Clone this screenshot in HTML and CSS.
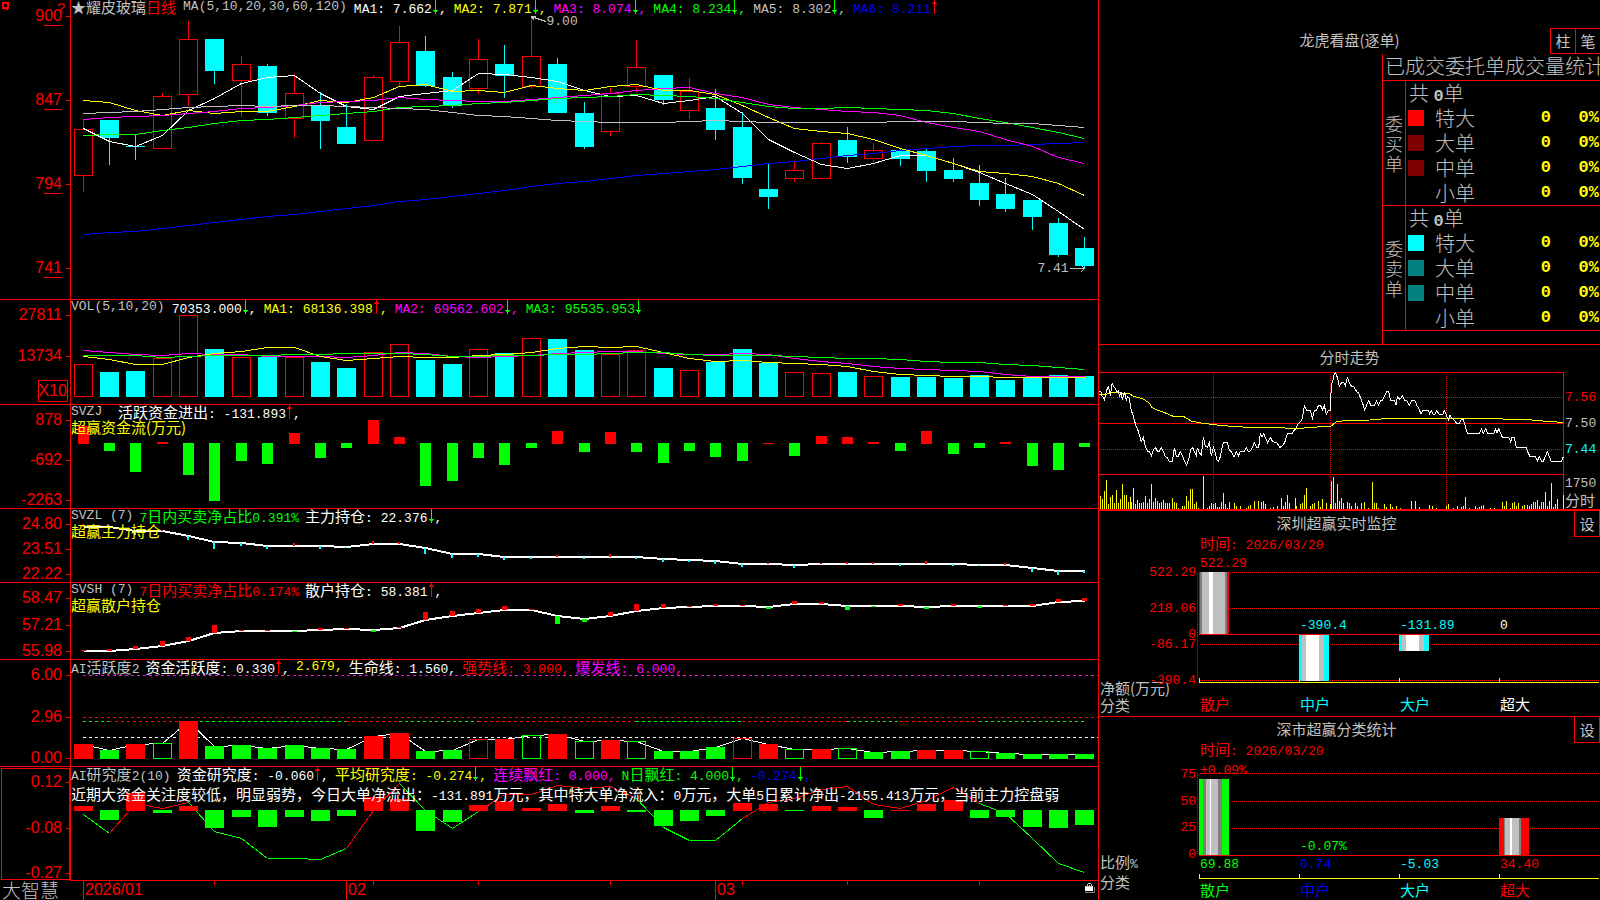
FILE: index.html
```html
<!DOCTYPE html>
<html lang="zh-CN">
<head>
    <meta charset="UTF-8">
    <meta name="viewport" content="width=device-width, initial-scale=1.0">
    <title>耀皮玻璃 日线</title>
    <link rel="stylesheet" href="styles.css">
</head>
<body>
    <svg class="defs" aria-hidden="true">
        <symbol id="down" viewBox="0 0 7 15">
            <path d="M3.5 0V14M1 10.5H6M2 11.5H5M3 12.5H4" fill="none" stroke="#0f0"/>
        </symbol>
        <symbol id="up" viewBox="0 0 7 15">
            <path d="M3.5 0V14M3 1.5H4M2 2.5H5M1 3.5H6" fill="none" stroke="#f00"/>
        </symbol>
    </svg>

    <div class="terminal">
        <main class="charts">
            <section class="panel">
                <div class="axis axis-price">
                    <svg class="corner" viewBox="0 0 10 10"><path d="M3 3H8V8H3ZM7 8V10" fill="none" stroke="#f00" stroke-width="2"/></svg>
                    <span class="help">?</span>
                    <span class="tick">900</span>
                    <span class="tick">847</span>
                    <span class="tick">794</span>
                    <span class="tick">741</span>
                </div>
                <div class="plot">
                    <svg id="price" viewBox="71 0 1027 299" preserveAspectRatio="none"></svg>
                    <div class="legend legend-loose">
                        <span class="name"><span class="cn">★耀皮玻璃</span><span class="cn red">日线</span></span>
                        <span class="name">MA(5,10,20,30,60,120)</span>
                        <span class="white">MA1: 7.662<svg class="arrow"><use href="#down"/></svg>,</span>
                        <span class="yellow">MA2: 7.871<svg class="arrow"><use href="#down"/></svg>,</span>
                        <span class="magenta">MA3: 8.074<svg class="arrow"><use href="#down"/></svg>,</span>
                        <span class="green">MA4: 8.234<svg class="arrow"><use href="#down"/></svg>,</span>
                        <span class="gray">MA5: 8.302<svg class="arrow"><use href="#down"/></svg>,</span>
                        <span class="blue">MA6: 8.211<svg class="arrow"><use href="#up"/></svg></span>
                    </div>
                    <span class="mark mark-high">9.00</span>
                    <span class="mark mark-low">7.41</span>
                </div>
            </section>

            <section class="panel">
                <div class="axis axis-vol">
                    <span class="tick">27811</span>
                    <span class="tick">13734</span>
                    <span class="unit">X10</span>
                </div>
                <div class="plot">
                    <svg id="volume" viewBox="71 300 1027 104" preserveAspectRatio="none"></svg>
                    <div class="legend legend-loose">
                        <span class="name">VOL(5,10,20)</span>
                        <span class="white">70353.000<svg class="arrow"><use href="#down"/></svg>,</span>
                        <span class="yellow">MA1: 68136.398<svg class="arrow"><use href="#up"/></svg>,</span>
                        <span class="magenta">MA2: 69562.602<svg class="arrow"><use href="#down"/></svg>,</span>
                        <span class="green">MA3: 95535.953<svg class="arrow"><use href="#down"/></svg></span>
                    </div>
                </div>
            </section>

            <section class="panel">
                <div class="axis">
                    <span class="tick">878</span>
                    <span class="tick">-692</span>
                    <span class="tick">-2263</span>
                </div>
                <div class="plot">
                    <svg id="svzj" viewBox="71 405 1027 103" preserveAspectRatio="none"></svg>
                    <div class="legend">
                        <span class="name wide">SVZJ</span>
                        <span class="white"><span class="cn">活跃资金进出</span>: -131.893<svg class="arrow"><use href="#up"/></svg>,</span>
                        <span class="subtitle cn">超赢资金流(万元)</span>
                    </div>
                </div>
            </section>

            <section class="panel">
                <div class="axis">
                    <span class="tick">24.80</span>
                    <span class="tick">23.51</span>
                    <span class="tick">22.22</span>
                </div>
                <div class="plot">
                    <svg id="svzl" viewBox="71 509 1027 73" preserveAspectRatio="none"></svg>
                    <div class="legend">
                        <span class="name">SVZL (7)</span>
                        <span class="green">7<span class="cn">日内买卖净占比</span>0.391%</span>
                        <span class="white"><span class="cn">主力持仓</span>: 22.376<svg class="arrow"><use href="#down"/></svg>,</span>
                        <span class="subtitle cn">超赢主力持仓</span>
                    </div>
                </div>
            </section>

            <section class="panel">
                <div class="axis">
                    <span class="tick">58.47</span>
                    <span class="tick">57.21</span>
                    <span class="tick">55.98</span>
                </div>
                <div class="plot">
                    <svg id="svsh" viewBox="71 583 1027 76" preserveAspectRatio="none"></svg>
                    <div class="legend">
                        <span class="name">SVSH (7)</span>
                        <span class="red">7<span class="cn">日内买卖净占比</span>0.174%</span>
                        <span class="white"><span class="cn">散户持仓</span>: 58.381<svg class="arrow"><use href="#up"/></svg>,</span>
                        <span class="subtitle cn">超赢散户持仓</span>
                    </div>
                </div>
            </section>

            <section class="panel">
                <div class="axis">
                    <span class="tick">6.00</span>
                    <span class="tick">2.96</span>
                    <span class="tick">0.00</span>
                </div>
                <div class="plot">
                    <svg id="active" viewBox="71 660 1027 106" preserveAspectRatio="none"></svg>
                    <div class="legend">
                        <span class="name">AI<span class="cn">活跃度</span>2</span>
                        <span class="white"><span class="cn">资金活跃度</span>: 0.330<svg class="arrow"><use href="#up"/></svg>,</span>
                        <span class="yellow">2.679,</span>
                        <span class="white"><span class="cn">生命线</span>: 1.560,</span>
                        <span class="red"><span class="cn">强势线</span>: 3.000,</span>
                        <span class="magenta"><span class="cn">爆发线</span>: 6.000,</span>
                    </div>
                </div>
            </section>

            <section class="panel panel-last">
                <div class="axis axis-selected">
                    <span class="tick">0.12</span>
                    <span class="tick">-0.08</span>
                    <span class="tick">-0.27</span>
                </div>
                <div class="plot">
                    <svg id="research" viewBox="71 767 1027 113" preserveAspectRatio="none"></svg>
                    <div class="legend">
                        <span class="name">AI<span class="cn">研究度</span>2(10)</span>
                        <span class="white"><span class="cn">资金研究度</span>: -0.060<svg class="arrow"><use href="#up"/></svg>,</span>
                        <span class="yellow"><span class="cn">平均研究度</span>: -0.274<svg class="arrow"><use href="#down"/></svg>,</span>
                        <span class="magenta"><span class="cn">连续飘红</span>: 0.000,</span>
                        <span class="green">N<span class="cn">日飘红</span>: 4.000<svg class="arrow"><use href="#down"/></svg>,</span>
                        <span class="blue">-0.274<svg class="arrow"><use href="#down"/></svg>,</span>
                        <p class="note"><span class="cn">近期大资金关注度较低，明显弱势，今日大单净流出：</span>-131.891<span class="cn">万元，其中特大单净流入：</span>0<span class="cn">万元，大单</span>5<span class="cn">日累计净出</span>-2155.413<span class="cn">万元，当前主力控盘弱</span></p>
                    </div>
                </div>
            </section>

            <footer class="timeline">
                <div class="brand">大智慧</div>
                <div class="months">
                    <svg id="ticks" viewBox="71 881 1027 19" preserveAspectRatio="none"></svg>
                    <span>2026/01</span>
                    <span>02</span>
                    <span>03</span>
                    <svg class="lock" viewBox="0 0 10 11">
                        <path d="M2.5 4V2M3 1.5H6M6.5 2V4" fill="none" stroke="#c0c0c0"/>
                        <path d="M4 3.5H5" stroke="#c0c0c0"/>
                        <path d="M0 4H8V9H0Z" fill="#fff"/>
                        <path d="M0 4.5H8" stroke="#c0c0c0"/>
                        <path d="M0 10.5H9.5V5" fill="none" stroke="#808080"/>
                    </svg>
                </div>
            </footer>
        </main>

        <aside class="side">
            <section class="orders">
                <header class="orders-head">
                    <h2>龙虎看盘(逐单)</h2>
                    <div class="switch">
                        <button type="button">柱</button>
                        <button type="button">笔</button>
                    </div>
                </header>
                <div class="stats">
                    <h3>已成交委托单成交量统计</h3>
                    <div class="group">
                        <div class="group-name">委买单</div>
                        <table>
                            <tr><th colspan="4">共 <b>0</b>单</th></tr>
                            <tr><td><i class="swatch buy-1"></i></td><td>特大</td><td class="n">0</td><td class="n">0%</td></tr>
                            <tr><td><i class="swatch buy-2"></i></td><td>大单</td><td class="n">0</td><td class="n">0%</td></tr>
                            <tr><td><i class="swatch buy-2"></i></td><td>中单</td><td class="n">0</td><td class="n">0%</td></tr>
                            <tr><td></td><td>小单</td><td class="n">0</td><td class="n">0%</td></tr>
                        </table>
                    </div>
                    <div class="group">
                        <div class="group-name">委卖单</div>
                        <table>
                            <tr><th colspan="4">共 <b>0</b>单</th></tr>
                            <tr><td><i class="swatch sell-1"></i></td><td>特大</td><td class="n">0</td><td class="n">0%</td></tr>
                            <tr><td><i class="swatch sell-2"></i></td><td>大单</td><td class="n">0</td><td class="n">0%</td></tr>
                            <tr><td><i class="swatch sell-2"></i></td><td>中单</td><td class="n">0</td><td class="n">0%</td></tr>
                            <tr><td></td><td>小单</td><td class="n">0</td><td class="n">0%</td></tr>
                        </table>
                    </div>
                </div>
            </section>

            <section class="intraday">
                <h2>分时走势</h2>
                <div class="intraday-body">
                    <svg id="intraday" viewBox="27 96 1395 411" preserveAspectRatio="none"></svg>
                    <div class="scale">
                        <span class="red">7.56</span>
                        <span>7.50</span>
                        <span class="cyan">7.44</span>
                        <span class="scale-vol">1750</span>
                        <span class="cn">分时</span>
                    </div>
                </div>
            </section>

            <section class="monitor">
                <header class="monitor-head">
                    <h2>深圳超赢实时监控</h2>
                    <button type="button">设</button>
                </header>
                <p class="date"><span class="cn">时间</span>: 2026/03/20</p>
                <div class="bar-chart">
                    <div class="y-axis">
                        <span class="y" style="top: 8%">522.29</span>
                        <span class="y" style="top: 30%">218.06</span>
                        <span class="y" style="top: 46%">0</span>
                        <span class="y" style="top: 52%">-86.17</span>
                        <span class="y" style="top: 74%">-390.4</span>
                        <span class="row-name cn">净额(万元)</span>
                        <span class="row-name cn">分类</span>
                    </div>
                    <div class="bars">
                        <svg id="net" viewBox="1197 552 403 144" preserveAspectRatio="none"></svg>
                        <div class="values">
                            <div><span class="red" style="top: 3%">522.29</span></div>
                            <div><span class="cyan" style="top: 46%">-390.4</span></div>
                            <div><span class="cyan" style="top: 46%">-131.89</span></div>
                            <div><span class="white" style="top: 46%">0</span></div>
                        </div>
                    </div>
                    <div class="cats cn">
                        <span class="red">散户</span>
                        <span class="cyan">中户</span>
                        <span class="cyan">大户</span>
                        <span class="white">超大</span>
                    </div>
                </div>
            </section>

            <section class="monitor monitor-ratio">
                <header class="monitor-head">
                    <h2>深市超赢分类统计</h2>
                    <button type="button">设</button>
                </header>
                <p class="date"><span class="cn">时间</span>: 2026/03/20</p>
                <div class="bar-chart">
                    <div class="y-axis">
                        <span class="y" style="top: 6%">75</span>
                        <span class="y" style="top: 25%">50</span>
                        <span class="y" style="top: 44%">25</span>
                        <span class="y" style="top: 63%">0</span>
                        <span class="row-name"><span class="cn">比例</span>%</span>
                        <span class="row-name cn">分类</span>
                    </div>
                    <div class="bars">
                        <svg id="ratio" viewBox="1197 758 403 122" preserveAspectRatio="none"></svg>
                        <div class="values">
                            <div><span class="red" style="top: 4%">±0.09%</span><span class="green" style="top: 81%">69.88</span></div>
                            <div><span class="green" style="top: 66%">-0.07%</span><span class="blue" style="top: 81%">0.74</span></div>
                            <div><span class="cyan" style="top: 81%">-5.03</span></div>
                            <div><span class="red" style="top: 81%">34.40</span></div>
                        </div>
                    </div>
                    <div class="cats cn">
                        <span class="green">散户</span>
                        <span class="blue">中户</span>
                        <span class="cyan">大户</span>
                        <span class="red">超大</span>
                    </div>
                </div>
            </section>
        </aside>
    </div>

    <script src="script.js"></script>
</body>
</html>
```
FILE: styles.css
```css
* {
    box-sizing: border-box;
}

body {
    margin: 0;
    background-color: #000;
    color: #c0c0c0;
    font-family: "Liberation Mono", "Noto Sans CJK SC", monospace;
    font-size: 13px;
    line-height: 16px;
}

h2, h3, p {
    margin: 0;
    font-weight: normal;
}

svg {
    display: block;
    shape-rendering: crispEdges;
}

button {
    background-color: #000;
    color: #c0c0c0;
    border: 1px solid #f00;
    padding: 0;
    width: 26px;
    height: 26px;
    font-family: "Noto Sans CJK SC", sans-serif;
    font-size: 15px;
    line-height: 20px;
    cursor: pointer;
}

.defs {
    position: absolute;
    width: 0;
    height: 0;
}

.cn {
    font-family: "Noto Sans CJK SC", sans-serif;
    font-size: 15px;
}

.red { color: #f00; }
.green { color: #0f0; }
.blue { color: #00f; }
.cyan { color: #0ff; }
.yellow { color: #ff0; }
.magenta { color: #f0f; }
.white { color: #fff; }
.gray { color: #c0c0c0; }

.terminal {
    display: grid;
    grid-template-columns: 1099fr 501fr;
    height: 100vh;
    overflow: hidden;
}

/* left: stacked indicator panels */
.charts {
    display: grid;
    grid-template-rows: 300fr 105fr 104fr 74fr 77fr 107fr 114fr 19fr;
    min-width: 0;
    border-right: 1px solid #f00;
}

.panel {
    display: grid;
    grid-template-columns: 71px 1fr;
    min-height: 0;
    border-bottom: 1px solid #f00;
}

.panel-last {
    border-bottom: none;
}

.panel-last .plot {
    border-bottom: 1px solid #f00;
}

.axis {
    position: relative;
    display: flex;
    flex-direction: column;
    justify-content: space-between;
    padding-top: 7px;
    border-right: 1px solid #f00;
    color: #f00;
    font-family: "Liberation Sans", Arial, sans-serif;
    font-size: 16px;
    text-align: right;
}

.tick {
    position: relative;
    padding-right: 8px;
}

.tick::after {
    content: "";
    position: absolute;
    right: 0;
    top: 8px;
    width: 4px;
    border-top: 1px solid #f00;
}

.axis-price {
    padding: 8px 0 23px;
}

.axis-price .tick::before {
    content: "";
    position: absolute;
    right: 8px;
    bottom: -2px;
    width: 18px;
    border-top: 1px solid #f00;
}

.corner {
    position: absolute;
    left: 0;
    top: 0;
    width: 10px;
    height: 10px;
}

.help {
    position: absolute;
    right: 4px;
    top: 0;
    color: #c00000;
    font-size: 15px;
    font-weight: bold;
}

.axis-vol {
    justify-content: flex-start;
}

.axis-vol .tick + .tick {
    margin-top: 25px;
}

.unit {
    align-self: flex-end;
    margin: 16px 2px 0 0;
    border: 1px solid #f00;
    line-height: 20px;
}

.axis-selected {
    outline: 1px solid #f00;
    outline-offset: -2px;
}

.plot {
    position: relative;
    display: grid;
    min-width: 0;
    min-height: 0;
}

.plot > svg {
    grid-area: 1 / 1;
    width: 100%;
    height: 100%;
    min-height: 0;
}

.legend {
    grid-area: 1 / 1;
    display: flex;
    flex-wrap: wrap;
    align-content: flex-start;
    column-gap: 6px;
    z-index: 1;
    white-space: pre;
    line-height: 14px;
}

.legend-loose {
    column-gap: 7px;
}

.legend > span {
    height: 15px;
}

.name {
    color: #c0c0c0;
}

.name.wide {
    width: 41px;
}

.arrow {
    display: inline-block;
    width: 7px;
    height: 15px;
    vertical-align: -2px;
}

.subtitle, .note {
    flex: 0 0 100%;
}

.subtitle {
    color: #ff0;
}

.note {
    padding-top: 5px;
    color: #fff;
}

.mark {
    position: absolute;
    line-height: 16px;
}

.mark-high {
    left: 46.3%;
    top: 4.7%;
}

.mark-low {
    left: 94.1%;
    top: 87.3%;
}

.timeline {
    display: grid;
    grid-template-columns: 71px 1fr;
    min-height: 0;
}

.brand {
    padding-left: 2px;
    font-family: "Noto Sans CJK SC", sans-serif;
    font-size: 19px;
    font-weight: 300;
    line-height: 17px;
}

.months {
    position: relative;
    display: grid;
    grid-template-columns: 263fr 369fr 383fr;
    padding-left: 12px;
    color: #f00;
    font-family: "Liberation Sans", Arial, sans-serif;
    font-size: 16px;
    line-height: 18px;
}

.months > span {
    border-left: 1px solid #f00;
    padding-left: 1px;
}

#ticks {
    position: absolute;
    inset: 0;
    width: 100%;
    height: 100%;
}

.lock {
    position: absolute;
    right: 3px;
    top: 1px;
    width: 10px;
    height: 11px;
}

/* right: order stats, intraday line, fund monitors */
.side {
    display: grid;
    grid-template-rows: 345fr 166fr 206fr 183fr;
    min-width: 0;
}

.side h2 {
    font-family: "Noto Sans CJK SC", sans-serif;
    font-size: 15px;
    text-align: center;
}

.orders {
    display: flex;
    flex-direction: column;
    min-height: 0;
    border-bottom: 1px solid #f00;
}

.orders-head {
    display: grid;
    grid-template-columns: 50px 1fr 50px;
    padding-top: 28px;
}

.orders-head h2 {
    grid-column: 2;
    line-height: 24px;
}

.switch {
    display: flex;
}

.switch button {
    width: 25px;
    border-right: none;
}

.stats {
    flex: 1;
    align-self: flex-end;
    width: 218px;
    overflow: hidden;
    border-left: 1px solid #f00;
    font-family: "Noto Sans CJK SC", sans-serif;
    font-weight: 300;
}

.stats h3 {
    height: 27px;
    padding-left: 2px;
    border-bottom: 1px solid #f00;
    font-size: 20px;
    font-weight: 300;
    line-height: 24px;
    white-space: nowrap;
}

.group {
    display: flex;
    height: 125px;
    border-bottom: 1px solid #f00;
    font-size: 20px;
}

.group-name {
    display: flex;
    align-items: center;
    width: 23px;
    padding: 0 2px;
    border-right: 1px solid #f00;
    font-size: 18px;
    line-height: 20px;
    word-break: break-all;
}

.group table {
    flex: 1;
    height: 124px;
    table-layout: fixed;
    border-collapse: collapse;
    line-height: 20px;
}

.group th, .group td {
    height: 25px;
    padding: 0;
    font-weight: 300;
    text-align: left;
}

.group tr:first-child th {
    height: 24px;
    padding-left: 3px;
}

.group b {
    font-family: "Liberation Mono", monospace;
    font-size: 17px;
    font-weight: bold;
    line-height: 0;
}

.group td:first-child {
    width: 29px;
    padding-left: 2px;
}

.group td:nth-child(2) {
    width: 60px;
}

.group .n {
    width: 56px;
    color: #ff0;
    font-family: "Liberation Mono", monospace;
    font-size: 17px;
    font-weight: bold;
    text-align: right;
}

.group .n:last-child {
    width: 49px;
    padding-right: 1px;
}

.swatch {
    display: block;
    width: 16px;
    height: 16px;
}

.buy-1 { background-color: #f00; }
.buy-2 { background-color: #800000; }
.sell-1 { background-color: #0ff; }
.sell-2 { background-color: #008080; }

.intraday {
    display: flex;
    flex-direction: column;
    min-height: 0;
    border-bottom: 2px solid #f00;
}

.intraday h2 {
    height: 27px;
    line-height: 24px;
}

.intraday-body {
    flex: 1;
    display: grid;
    grid-template-columns: 1fr 36px;
    min-height: 0;
}

.intraday-body svg {
    width: 100%;
    height: 100%;
    min-height: 0;
}

.scale {
    display: flex;
    flex-direction: column;
    gap: 10px;
    padding: 18px 0 0 1px;
}

.scale-vol {
    margin-top: 8px;
}

.scale .cn {
    margin-top: -10px;
}

.monitor {
    display: flex;
    flex-direction: column;
    min-height: 0;
    border-bottom: 1px solid #f00;
}

.monitor-ratio {
    border-bottom: none;
}

.monitor-head {
    display: flex;
    height: 26px;
}

.monitor-head h2 {
    flex: 1;
    line-height: 24px;
}

.monitor-head button {
    border-top: none;
}

.date {
    height: 15px;
    padding-left: 101px;
    color: #f00;
    line-height: 11px;
}

.bar-chart {
    flex: 1;
    display: grid;
    grid-template: 1fr 20px / 98px 1fr;
    min-height: 0;
}

.y-axis {
    grid-row: 1 / 3;
    position: relative;
    display: flex;
    flex-direction: column;
    justify-content: flex-end;
    padding: 0 0 3px 1px;
}

.y-axis .row-name {
    line-height: 17px;
}

.monitor-ratio .y-axis {
    padding-bottom: 10px;
}

.y-axis .y {
    position: absolute;
    right: 1px;
    color: #f00;
}

.bars {
    position: relative;
    min-height: 0;
}

.bars svg {
    position: absolute;
    width: 100%;
    height: 100%;
}

.values, .cats {
    display: grid;
    grid-template-columns: repeat(4, 1fr);
    padding-left: 3px;
}

.values {
    height: 100%;
}

.values div {
    position: relative;
}

.values span {
    position: absolute;
    left: 0;
}

.cats {
    line-height: 16px;
}

.monitor-ratio .cats {
    line-height: 19px;
}
```
FILE: script.js
```js
const RED = '#f00', GREEN = '#0f0', CYAN = '#0ff', WHITE = '#fff';
const YELLOW = '#ff0', MAGENTA = '#f0f', BLUE = '#00f', GRAY = '#c0c0c0';

// centre of the i-th daily bar
const barX = i => Math.floor(83.16 + i * 26.36);

function add(id, tag, attrs) {
    const el = document.createElementNS('http://www.w3.org/2000/svg', tag);
    for (const key in attrs) {
        el.setAttribute(key, attrs[key]);
    }
    document.getElementById(id).appendChild(el);
}

function box(id, x, y, w, h, fill) {
    add(id, 'rect', { x: x, y: y, width: w, height: h, fill: fill });
}

function frame(id, x, y, w, h, stroke) {
    add(id, 'rect', { x: x + 0.5, y: y + 0.5, width: w - 1, height: h - 1, fill: 'none', stroke: stroke });
}

function poly(id, points, stroke, width) {
    add(id, 'polyline', {
        points: points.join(' '), fill: 'none', stroke: stroke,
        'stroke-width': width || 1, 'vector-effect': 'non-scaling-stroke'
    });
}

function series(id, ys, stroke, width) {
    const shift = width === 2 ? 0 : 0.5;
    poly(id, ys.map((y, i) => (barX(i) + 0.5) + ',' + (y + shift)), stroke, width);
}

function rule(id, x1, y1, x2, y2, stroke, dash) {
    const attrs = { d: `M${x1} ${y1}L${x2} ${y2}`, stroke: stroke, 'vector-effect': 'non-scaling-stroke' };
    if (dash) {
        attrs['stroke-dasharray'] = dash;
    }
    add(id, 'path', attrs);
}

// type, high, top, bottom, low
const candles = [
    ['r', 119, 129, 175, 192], ['c', 120, 120, 138, 165], ['c', 134, 146, 147, 160], ['r', 93, 96, 148, 148],
    ['r', 21, 39, 94, 106], ['c', 39, 39, 71, 84], ['r', 56, 64, 80, 117], ['c', 64, 66, 113, 116],
    ['r', 74, 93, 118, 138], ['c', 92, 105, 121, 149], ['c', 104, 127, 144, 144], ['r', 75, 77, 140, 140],
    ['r', 26, 42, 81, 87], ['c', 36, 51, 86, 87], ['c', 72, 77, 106, 108], ['r', 39, 59, 88, 94],
    ['c', 45, 64, 76, 98], ['r', 16, 56, 86, 89], ['c', 58, 64, 113, 113], ['c', 102, 113, 147, 149],
    ['r', 88, 93, 131, 136], ['r', 40, 67, 86, 92], ['c', 75, 75, 100, 105], ['r', 78, 91, 110, 119],
    ['c', 89, 108, 130, 140], ['c', 112, 127, 178, 184], ['c', 164, 189, 197, 209], ['r', 162, 170, 178, 182],
    ['r', 142, 143, 178, 178], ['c', 127, 140, 157, 163], ['r', 143, 150, 158, 162], ['c', 148, 150, 159, 166],
    ['c', 149, 151, 171, 182], ['c', 158, 170, 179, 182], ['c', 165, 183, 200, 206], ['c', 178, 194, 209, 212],
    ['c', 200, 200, 217, 230], ['c', 218, 223, 255, 257], ['c', 237, 248, 266, 268]
];

function drawPrice() {
    candles.forEach(([type, high, top, bottom, low], i) => {
        const x = barX(i);
        if (type === 'r') {
            frame('price', x - 9, top, 19, bottom - top + 1, RED);
            box('price', x, high, 1, top - high, RED);
            box('price', x, bottom, 1, low - bottom, RED);
        } else {
            box('price', x - 9, top, 19, bottom - top, CYAN);
            box('price', x, high, 1, low - high, CYAN);
        }
    });
    series('price', [234,232,231,228,225,222,219,216,214,211,208,205,201,199,196,193,190,186,183,181,178,175,173,171,169,166,163,161,158,155,153,150,148,146,145,145,144,143,142], BLUE);
    series('price', [128,141,146,135,110,98,83,77,75,93,106,109,96,93,90,73,74,77,81,90,96,95,103,100,96,113,139,152,164,168,163,155,155,163,172,183,194,211,229], WHITE);
    series('price', [100,102,110,115,110,113,111,111,106,100,102,97,86,84,91,90,92,85,88,90,86,84,90,90,94,105,117,128,131,133,139,148,155,163,171,173,176,183,195], YELLOW);
    series('price', [119,117,116,115,113,111,108,107,105,102,101,100,97,99,100,101,101,99,97,95,93,90,88,87,93,97,104,107,109,111,112,115,122,127,131,139,146,157,163], MAGENTA);
    series('price', [135,134,134,130,127,123,120,119,117,115,113,111,107,106,105,103,102,100,98,97,96,94,95,96,98,102,106,108,108,107,108,109,110,113,118,122,127,132,138], GREEN);
    series('price', [113,112,111,109,107,106,105,106,105,105,106,107,108,109,112,115,116,118,120,121,122,122,122,121,120,121,122,122,122,122,122,121,121,121,122,123,123,125,127], GRAY);
    // pointers to the highest and lowest price
    poly('price', ['546,21.5', '531,16.5', '536,16.5'], GRAY);
    poly('price', ['531,16.5', '534,19.5'], GRAY);
    poly('price', ['1070,268.5', '1085,268.5'], GRAY);
    poly('price', ['1081,265', '1084.5,268.5', '1081,272'], GRAY);
}

function drawVolume() {
    const tops = [364,372,371,358,315,349,357,357,357,362,368,352,344,360,364,349,353,338,339,350,354,350,368,370,362,349,363,372,373,372,376,377,377,378,375,380,377,375,376];
    tops.forEach((top, i) => {
        if (candles[i][0] === 'r') {
            frame('volume', barX(i) - 9, top, 19, 397 - top, RED);
        } else {
            box('volume', barX(i) - 9, top, 19, 397 - top, CYAN);
        }
    });
    series('volume', [350,352,354,355,353,354,354,356,356,356,357,355,352,353,356,357,356,355,353,352,351,351,353,354,354,353,354,358,361,363,366,368,369,370,371,374,376,376,376], MAGENTA);
    series('volume', [356,359,364,364,357,353,351,347,347,356,360,358,356,357,357,355,354,352,348,346,347,346,352,358,361,360,362,363,364,366,371,374,375,376,376,377,377,377,377], YELLOW);
    series('volume', [355,355,355,357,356,355,355,355,354,354,353,353,353,354,356,356,355,355,354,354,353,352,352,354,355,355,355,356,357,358,358,359,361,362,362,364,365,367,369], GREEN);
}

function drawFlow() {
    const flow = [18,-8,-29,2,-32,-58,-18,-21,11,-15,-5,24,7,-43,-38,-15,-22,-5,13,-9,12,-9,-20,-8,-14,-18,1,-13,8,7,2,-8,13,-11,-5,2,-23,-27,-4];
    flow.forEach((v, i) => {
        if (v > 0) {
            box('svzj', barX(i) - 5, 444 - v, 11, v, RED);
        } else {
            box('svzj', barX(i) - 5, 443, 11, -v, GREEN);
        }
    });
}

// holding line with a small change bar on every day
function drawHolding(id, ys, changes, width, downColor) {
    series(id, ys, WHITE, 2);
    changes.forEach((v, i) => {
        const x = barX(i) - Math.floor(width / 2);
        box(id, x, v > 0 ? ys[i] - v : ys[i], width, Math.abs(v), v > 0 ? RED : downColor);
    });
}

function drawActive() {
    const id = 'active';
    rule(id, 83, 675.5, 1098, 675.5, MAGENTA, '3 3');
    rule(id, 83, 717.5, 1098, 717.5, RED, '3 3');
    rule(id, 83, 737.5, 1098, 737.5, WHITE, '3 3');
    const turns = [83, 109, 194, 346, 399, 478, 636, 742, 847, 900, 979, 1085];
    for (let i = 0; i < turns.length - 1; i++) {
        rule(id, turns[i], 721.5, turns[i + 1], 721.5, i % 2 ? RED : GREEN, '3 3');
    }
    // capital letters are solid bars
    const kinds = 'RGRgRGGGGGGRRGGrRgRgRgGGGrRgRgGGRRgGGGG';
    const tops = [744,750,744,743,721,746,745,748,745,748,749,736,733,751,750,739,739,735,734,741,740,741,751,751,747,738,744,749,749,748,752,751,750,750,751,753,754,754,754];
    series(id, tops, WHITE);
    tops.forEach((top, i) => {
        const kind = kinds[i];
        const color = kind.toUpperCase() === 'R' ? RED : GREEN;
        const draw = kind === kind.toUpperCase() ? box : frame;
        draw(id, barX(i) - 9, top, 19, 759 - top, color);
    });
}

function drawResearch() {
    const id = 'research';
    const line = [814,833,803,808,802,831,838,858,858,859,848,810,783,810,828,811,794,794,785,788,786,798,827,840,840,818,802,798,789,786,804,808,800,787,803,813,838,863,872];
    const colors = 'grrrggggggrrgggrrrrrrgggg' + 'rrrrrrrrrgggg';
    for (let i = 0; i < line.length - 1; i++) {
        poly(id, [(barX(i) + 0.5) + ',' + (line[i] + 0.5), (barX(i + 1) + 0.5) + ',' + (line[i + 1] + 0.5)],
            colors[i] === 'r' ? RED : GREEN);
    }
    const bars = [5,-10,18,-3,5,-18,-7,-17,-7,-11,-6,14,12,-21,-12,6,10,3,7,-3,5,-2,-16,-11,-6,8,7,-1,5,4,-8,1,7,11,-8,-7,-17,-18,-15];
    bars.forEach((v, i) => {
        box(id, barX(i) - 9, v > 0 ? 811 - v : 810, 19, Math.abs(v), v > 0 ? RED : GREEN);
    });
}

function drawIntraday() {
    const id = 'intraday';
    // three units to the pixel
    [172, 328].forEach(y => rule(id, 27, y + 0.5, 1420, y + 0.5, RED, '1 1'));
    [370.5, 721.5, 1069.5].forEach(x => rule(id, x, 97, x, 507, RED, '1 1'));
    [97.5, 250.5, 403.5].forEach(y => rule(id, 27, y, 1420, y, RED));
    rule(id, 1420.5, 97, 1420.5, 507, RED);
    const vol = '31,468 37,477 43,453 49,420 55,493 61,471 67,465 73,490 79,450 85,490 91,477 97,432 103,465 109,465 115,487 121,471 124,487 130,444 136,493 142,480 148,490 154,490 160,487 166,468 172,490 178,477 184,432 190,487 196,474 202,484 208,490 214,487 220,480 226,490 232,490 238,490 247,474 253,487 259,490 265,504 277,499 283,499 289,468 295,484 301,447 307,447 313,493 319,487 325,504 340,408 352,504 358,499 364,490 370,493 376,490 382,502 388,502 394,487 400,459 406,493 412,504 418,487 433,490 439,499 451,499 469,504 475,499 481,496 493,483 505,483 513,487 520,483 526,493 540,504 550,502 562,499 574,474 580,499 586,487 592,465 598,490 616,474 620,499 630,493 638,490 644,465 649,444 661,499 667,493 673,490 685,483 691,502 697,477 709,490 721,492 724,423 730,411 736,490 742,432 748,484 754,474 760,490 772,487 778,490 784,499 796,490 802,499 814,490 823,487 835,504 847,426 853,490 859,490 865,504 883,492 889,502 901,492 907,502 919,499 931,504 964,483 976,483 988,502 1018,495 1026,499 1040,504 1069,499 1075,492 1090,504 1102,499 1114,502 1120,499 1126,471 1138,504 1156,499 1162,504 1168,502 1174,499 1180,495 1200,504 1213,504 1237,487 1243,499 1249,483 1261,504 1267,490 1273,487 1279,499 1285,490 1297,499 1303,495 1312,495 1318,499 1324,492 1330,487 1336,487 1342,480 1348,499 1354,487 1360,487 1366,456 1372,499 1378,484 1384,429 1390,502 1396,493 1402,477 1420,465';
    vol.split(' ').forEach(pair => {
        const [x, y] = pair.split(',').map(Number);
        box(id, x - 1, y, 3, 507 - y, YELLOW);
    });
    poly(id, ['27,162 35,162 43,165 50,162 66,157 90,157 97,160 118,160 130,169 158,176 178,189 185,202 203,211 215,214 250,229 280,229 305,244 340,250 390,256 425,259 475,262 570,263 600,265 635,265 660,262 722,259 740,245 770,241 840,240 845,238 930,235 1235,235 1240,238 1315,239 1380,245 1420,247'], YELLOW);
    poly(id, ['27,155 33,155 36,168 40,172 43,180 48,160 52,145 56,140 61,168 64,145 67,128 71,140 76,145 80,155 86,152 88,170 93,155 97,180 103,155 109,180 113,170 118,175 121,195 124,212 129,225 133,240 137,255 143,268 148,285 154,305 160,292 166,320 172,333 178,333 184,348 190,330 196,322 202,333 208,333 214,323 220,335 226,350 232,353 238,364 247,364 250,345 253,323 259,348 265,348 271,335 278,348 284,365 290,376 296,358 302,328 308,323 314,338 319,348 322,323 328,338 334,345 337,320 340,292 346,318 352,322 358,308 364,348 370,322 376,340 380,358 385,364 391,350 395,328 400,308 412,308 418,330 424,335 430,348 434,348 439,335 445,348 451,335 463,335 469,323 475,335 481,333 487,322 493,308 500,322 506,322 511,281 516,292 521,281 527,295 533,308 541,292 548,305 560,308 570,322 576,318 584,308 592,281 606,281 612,272 618,265 624,252 632,245 637,235 643,197 649,210 661,212 667,235 673,212 679,212 685,197 692,197 698,210 703,197 709,222 715,212 721,212 724,135 728,125 731,108 736,97 742,112 748,138 755,128 761,128 766,138 772,113 778,128 785,140 791,140 800,155 806,158 812,175 818,190 824,210 830,195 836,182 842,195 853,195 860,183 866,195 872,182 878,180 884,168 890,155 896,155 901,180 914,182 918,195 922,170 930,178 937,168 943,180 950,182 958,195 965,182 975,182 981,197 987,207 993,222 999,212 1015,212 1019,222 1024,212 1029,222 1035,222 1040,212 1047,222 1059,222 1063,212 1069,225 1075,240 1080,225 1086,235 1092,240 1100,250 1108,250 1114,238 1119,238 1124,250 1128,268 1132,280 1168,280 1175,266 1180,280 1187,266 1193,280 1212,280 1217,266 1221,280 1226,266 1232,280 1237,292 1256,292 1262,305 1266,292 1273,292 1279,322 1308,322 1313,335 1319,348 1336,348 1342,363 1348,350 1354,363 1360,363 1366,350 1372,335 1378,350 1384,364 1414,364 1420,350'], WHITE);
}

// a bar is shaded with vertical stripes: [width, color]
function stripes(id, x, y, h, parts) {
    parts.forEach(([w, color]) => {
        box(id, x, y, w, h, color);
        x += w;
    });
}

function drawMonitor(id, grid, zero, axisY) {
    grid.forEach(y => rule(id, 1200, y + 0.5, 1600, y + 0.5, RED, '1 1'));
    rule(id, 1197.5, grid[0], 1197.5, id === 'net' ? 680 : 855, RED, '1 1');
    rule(id, 1199, zero + 0.5, 1600, zero + 0.5, RED);
    rule(id, 1199, axisY + 0.5, 1599, axisY + 0.5, YELLOW);
    [1199, 1299, 1399, 1499].forEach(x => box(id, x, axisY - 4, 1, 4, YELLOW));
}

drawPrice();
drawVolume();
drawFlow();
drawHolding('svzl',
    [527,527,531,531,536,542,543,546,546,546,547,544,544,548,554,554,557,557,557,557,557,557,559,560,561,564,564,565,564,564,564,564,564,564,565,565,568,571,571],
    [3,-2,-4,1,-4,-7,-3,-3,3,-3,-1,3,2,-6,-4,-3,-3,-2,2,-2,3,-2,-3,-2,-3,-3,1,-3,1,2,2,-2,3,-2,-1,2,-4,-4,-2], 2, CYAN);
drawHolding('svsh',
    [651,651,649,646,641,633,631,631,631,630,629,630,628,620,616,613,610,610,616,619,616,611,608,607,606,606,607,604,604,606,606,606,607,606,606,606,606,602,601],
    [1,2,3,5,4,8,1,1,-1,2,1,-2,1,8,5,4,4,1,-8,-3,4,7,4,1,2,1,-2,3,2,-4,-1,2,-2,2,-2,1,2,3,3], 5, GREEN);
drawActive();
drawResearch();
drawIntraday();

[109, 214, 373, 478, 610, 742, 847, 979].forEach(x => box('ticks', x, 881, 1, 4, RED));

drawMonitor('net', [572, 608, 644, 680], 634, 682);
stripes('net', 1199, 572, 62, [[1, RED], [2, '#808080'], [7, GRAY], [4, WHITE], [12, GRAY], [2, '#808080'], [2, RED]]);
stripes('net', 1299, 635, 46, [[3, CYAN], [4, GRAY], [13, WHITE], [5, GRAY], [5, CYAN]]);
stripes('net', 1399, 635, 16, [[3, CYAN], [4, GRAY], [13, WHITE], [5, GRAY], [5, CYAN]]);

drawMonitor('ratio', [773, 801, 828], 855, 878);
stripes('ratio', 1199, 779, 76, [[4, GREEN], [3, '#808080'], [4, GRAY], [1, WHITE], [7, GRAY], [4, '#808080'], [7, GREEN]]);
stripes('ratio', 1499, 818, 37, [[5, RED], [1, '#808080'], [5, GRAY], [2, WHITE], [7, GRAY], [2, '#808080'], [8, RED]]);
```
